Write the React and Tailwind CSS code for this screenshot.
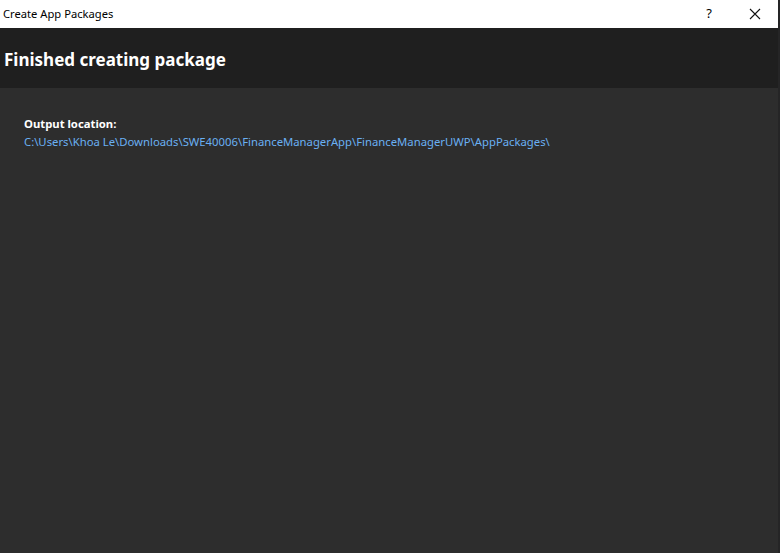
const font = { fontFamily: '"Noto Sans", "Open Sans", sans-serif' };

const App = () => {
  return (
    <div className="flex h-[553px] w-[780px] overflow-hidden bg-[#1e1e1e]" style={font}>
      <div className="flex w-[778px] flex-col">
        <div className="flex h-[28px] items-center justify-between bg-white pl-[3px]">
          <span className="text-[11.2px] text-black">Create App Packages</span>
          <div className="flex h-full items-center">
            <span className="w-[46px] text-center text-[13px] text-black">?</span>
            <span className="flex w-[46px] items-center justify-center">
              <svg width="12" height="12" viewBox="0 0 12 12" stroke="#111" strokeWidth="1.1">
                <path d="M1 1L11 11M11 1L1 11" />
              </svg>
            </span>
          </div>
        </div>
        <div className="flex h-[60px] items-center bg-[#1f1f1f] px-[4px] pt-[3px]">
          <h1 className="text-[17px] font-bold text-white">Finished creating package</h1>
        </div>
        <div className="flex-1 bg-[#2d2d2d] px-[24px] pt-[27px]">
          <p className="text-[11.3px] font-bold leading-[18px] text-white">Output location:</p>
          <p className="text-[11.3px] leading-[18px] text-[#6ab0f3]">
            C:\Users\Khoa Le\Downloads\SWE40006\FinanceManagerApp\FinanceManagerUWP\AppPackages\
          </p>
        </div>
      </div>
      <div className="w-[2px] bg-[#252526]" />
    </div>
  );
};

export default App;
